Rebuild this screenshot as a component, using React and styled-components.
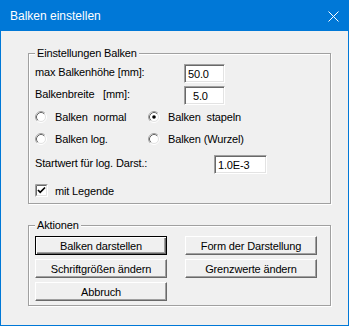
import React from 'react'
import styled, { createGlobalStyle } from 'styled-components'

const GlobalStyle = createGlobalStyle`
  html, body {
    margin: 0;
    padding: 0;
    background: #f0f0f0;
  }

  body {
    font-family: 'Liberation Sans', Arial, sans-serif;
  }
`

const Window = styled.div`
  width: 349px;
  height: 326px;
  box-sizing: border-box;
  border: 1px solid #0078d7;
  background: #f0f0f0;
  display: flex;
  flex-direction: column;
`

const TitleBar = styled.div`
  height: 30px;
  flex-shrink: 0;
  background: #0078d7;
  display: flex;
  align-items: center;
  justify-content: space-between;
  padding: 0 9px;
  color: #fff;
  font-size: 12px;
`

const Body = styled.div`
  padding: 22px 0 0 27px;
  font-size: 11px;
  letter-spacing: -0.15px;
  color: #000;
`

const Group = styled.div`
  position: relative;
  width: 303px;
  height: ${p => p.$height}px;
  box-sizing: border-box;
  margin-top: ${p => p.$mt || 0}px;
  padding: ${p => p.$pt}px 0 0 6px;
  border: 1px solid #a0a0a0;
  box-shadow: 1px 1px 0 #fff, inset 1px 1px 0 #fff;
`

const Legend = styled.span`
  position: absolute;
  top: -7px;
  left: 6px;
  padding: 0 2px;
  line-height: 13px;
  background: #f0f0f0;
`

const Row = styled.div`
  display: flex;
  align-items: ${p => p.$align || 'flex-start'};
  height: ${p => p.$height}px;
  margin-top: ${p => p.$mt || 0}px;
`

const Label = styled.span`
  width: ${p => p.$width}px;
  padding-top: 2px;
  line-height: 13px;
  white-space: pre;
`

const Field = styled.input`
  width: ${p => p.$width}px;
  height: 19px;
  box-sizing: border-box;
  margin: 0;
  padding: 0 0 0 ${p => p.$indent}px;
  border: 1px solid;
  border-color: #a0a0a0 #fff #fff #a0a0a0;
  box-shadow: inset 1px 1px 0 #696969, inset -1px -1px 0 #e3e3e3;
  background: #fff;
  font-family: inherit;
  font-size: 11px;
  letter-spacing: -0.15px;
  line-height: 15px;
  color: #000;
  outline: none;
`

const Option = styled.label`
  display: flex;
  align-items: center;
  width: ${p => p.$width ? `${p.$width}px` : 'auto'};
  line-height: 16px;
  white-space: pre;

  svg {
    flex-shrink: 0;
    margin-right: ${p => p.$gap}px;
  }
`

const ButtonGrid = styled.div`
  display: grid;
  grid-template-columns: 132px 132px;
  column-gap: 18px;
  row-gap: 4px;
`

const Button = styled.button`
  height: 19px;
  box-sizing: border-box;
  margin: 0;
  padding: 0;
  background: #f0f0f0;
  font-family: inherit;
  font-size: 11px;
  letter-spacing: -0.15px;
  color: #000;
  border: 1px solid;
  border-color: ${p => p.$default ? '#000' : '#fff #696969 #696969 #fff'};
  box-shadow: ${p => p.$default
    ? 'inset 1px 1px 0 #fff, inset -1px -1px 0 #696969, inset -2px -2px 0 #a0a0a0'
    : 'inset -1px -1px 0 #a0a0a0'};
`

function Radio({ checked }) {
  return (
    <svg width='12' height='12' viewBox='0 0 12 12'>
      <circle cx='6' cy='6' r='5.5' fill='none' stroke='#fff' />
      <path d='M2.11 9.89 A5.5 5.5 0 0 1 9.89 2.11' fill='none' stroke='#a0a0a0' />
      <circle cx='6' cy='6' r='4.5' fill='#fff' stroke='#e3e3e3' />
      <path d='M2.82 9.18 A4.5 4.5 0 0 1 9.18 2.82' fill='none' stroke='#696969' />
      {checked && <circle cx='6' cy='6' r='1.8' fill='#000' />}
    </svg>
  )
}

function Checkbox({ checked }) {
  return (
    <svg width='13' height='13' viewBox='0 0 13 13'>
      <rect x='0.5' y='0.5' width='12' height='12' fill='#fff' stroke='#fff' />
      <path d='M0.5 12.5 V0.5 H12.5' fill='none' stroke='#a0a0a0' />
      <path d='M1.5 11.5 H11.5 V1.5' fill='none' stroke='#e3e3e3' />
      <path d='M1.5 11.5 V1.5 H11.5' fill='none' stroke='#696969' />
      {checked && <path d='M3 6 L5.2 8.3 L10 3.5' fill='none' stroke='#000' strokeWidth='1.7' />}
    </svg>
  )
}

function App() {
  return <>
    <GlobalStyle />
    <Window>
      <TitleBar>
        <span>Balken einstellen</span>
        <svg width='11' height='11' viewBox='0 0 11 11'>
          <path d='M0.5 0.5 L10.5 10.5 M10.5 0.5 L0.5 10.5' stroke='#fff' strokeWidth='1' />
        </svg>
      </TitleBar>
      <Body>
        <Group $height={151} $pt={10}>
          <Legend>Einstellungen Balken</Legend>
          <Row $height={19}>
            <Label $width={149}>max Balkenhöhe [mm]:</Label>
            <Field $width={41} $indent={3} defaultValue='50.0' readOnly />
          </Row>
          <Row $height={19} $mt={3}>
            <Label $width={149}>Balkenbreite   [mm]:</Label>
            <Field $width={41} $indent={8} defaultValue='5.0' readOnly />
          </Row>
          <Row $height={16} $mt={4} $align='center'>
            <Option $width={113} $gap={8}><Radio />Balken  normal</Option>
            <Option $gap={8}><Radio checked />Balken  stapeln</Option>
          </Row>
          <Row $height={16} $mt={6} $align='center'>
            <Option $width={113} $gap={8}><Radio />Balken log.</Option>
            <Option $gap={8}><Radio />Balken (Wurzel)</Option>
          </Row>
          <Row $height={19} $mt={8}>
            <Label $width={179}>Startwert für log. Darst.:</Label>
            <Field $width={53} $indent={3} defaultValue='1.0E-3' readOnly />
          </Row>
          <Row $height={13} $mt={10} $align='center'>
            <Option $gap={7}><Checkbox checked />mit Legende</Option>
          </Row>
        </Group>
        <Group $height={81} $pt={10} $mt={21}>
          <Legend>Aktionen</Legend>
          <ButtonGrid>
            <Button $default>Balken darstellen</Button>
            <Button>Form der Darstellung</Button>
            <Button>Schriftgrößen ändern</Button>
            <Button>Grenzwerte ändern</Button>
            <Button>Abbruch</Button>
          </ButtonGrid>
        </Group>
      </Body>
    </Window>
  </>
}

export default App
